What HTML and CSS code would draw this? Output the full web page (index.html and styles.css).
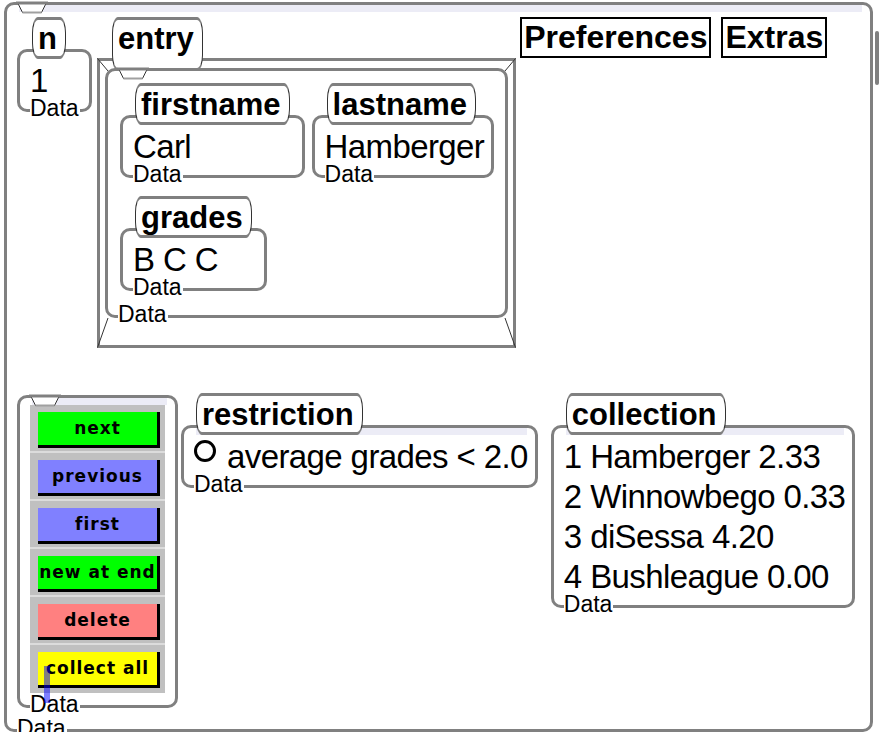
FILE: index.html
```html
<!DOCTYPE html>
<html lang="en">
<head>
    <meta charset="UTF-8">
    <title>Boxer - grade book</title>
    <link rel="stylesheet" href="styles.css">
</head>
<body>
    <div class="world">
        <div class="frame outer lav">
            <svg class="port" width="32" height="13" viewBox="0 0 32 13"><path d="M1.5 1.5L6.5 11.5H25.5L30.5 1.5" fill="#fff" stroke="#333"/><path d="M6.5 11.5H25.5" stroke="#a0a0a0" stroke-width="2"/><path d="M0 2H32" stroke="#808080" stroke-width="3"/></svg>

            <div class="row top-row">
                <!-- n -->
                <div class="box n-box">
                    <div class="tab">n</div>
                    <div class="frame">
                        <div class="line">1</div>
                        <span class="data">Data</span>
                    </div>
                </div>

                <!-- entry -->
                <div class="box entry-box">
                    <div class="tab tall">entry</div>
                    <div class="bevel">
                        <svg class="corner tl" width="12" height="14"><line x1="0.5" y1="0.5" x2="11" y2="13" stroke="#333"/></svg>
                        <svg class="corner tr" width="12" height="14"><line x1="11.5" y1="0.5" x2="1" y2="13" stroke="#333"/></svg>
                        <svg class="corner bl" width="12" height="32"><line x1="0.5" y1="31.5" x2="11" y2="2" stroke="#333"/></svg>
                        <svg class="corner br" width="12" height="32"><line x1="11.5" y1="31.5" x2="1" y2="2" stroke="#333"/></svg>
                        <div class="frame inner">
                            <svg class="port" width="32" height="13" viewBox="0 0 32 13"><path d="M1.5 1.5L6.5 11.5H25.5L30.5 1.5" fill="#fff" stroke="#333"/><path d="M6.5 11.5H25.5" stroke="#a0a0a0" stroke-width="2"/><path d="M0 2H32" stroke="#808080" stroke-width="3"/></svg>
                            <div class="fields">
                                <div class="box">
                                    <div class="tab">firstname</div>
                                    <div class="frame">
                                        <div class="line">Carl</div>
                                        <span class="data">Data</span>
                                    </div>
                                </div>
                                <div class="box">
                                    <div class="tab">lastname</div>
                                    <div class="frame">
                                        <div class="line">Hamberger</div>
                                        <span class="data">Data</span>
                                    </div>
                                </div>
                                <div class="box">
                                    <div class="tab">grades</div>
                                    <div class="frame">
                                        <div class="line">B C C</div>
                                        <span class="data">Data</span>
                                    </div>
                                </div>
                            </div>
                            <span class="data">Data</span>
                        </div>
                    </div>
                </div>

                <div class="menu prefs">Preferences</div>
                <div class="menu">Extras</div>
            </div>

            <div class="row bottom-row">
                <!-- buttons -->
                <div class="box control-box">
                    <div class="frame lav">
                        <svg class="port" width="32" height="13" viewBox="0 0 32 13"><path d="M1.5 1.5L6.5 11.5H25.5L30.5 1.5" fill="#fff" stroke="#333"/><path d="M6.5 11.5H25.5" stroke="#a0a0a0" stroke-width="2"/><path d="M0 2H32" stroke="#808080" stroke-width="3"/></svg>
                        <div class="panel">
                            <div class="cell"><div class="btn green">next</div></div>
                            <div class="cell"><div class="btn blue">previous</div></div>
                            <div class="cell"><div class="btn blue">first</div></div>
                            <div class="cell"><div class="btn green">new at end</div></div>
                            <div class="cell"><div class="btn pink">delete</div></div>
                            <div class="cell"><div class="btn yellow">collect all</div><span class="cursor"></span></div>
                        </div>
                        <span class="data">Data</span>
                    </div>
                </div>

                <!-- restriction -->
                <div class="box restriction-box">
                    <div class="tab">restriction</div>
                    <div class="frame lav">
                        <div class="line check-line"><span class="ring"></span>average grades &lt; 2.0</div>
                        <span class="data">Data</span>
                    </div>
                </div>

                <!-- collection -->
                <div class="box collection-box">
                    <div class="tab">collection</div>
                    <div class="frame lav">
                        <div class="line">1 Hamberger 2.33</div>
                        <div class="line">2 Winnowbego 0.33</div>
                        <div class="line">3 diSessa 4.20</div>
                        <div class="line">4 Bushleague 0.00</div>
                        <span class="data">Data</span>
                    </div>
                </div>
            </div>

            <span class="data">Data</span>
        </div>
        <div class="scroll"></div>
    </div>
</body>
</html>
```

FILE: styles.css
```css
* {
    box-sizing: border-box;
}

body {
    margin: 0;
    background: #fff;
    color: #000;
    font-family: "Liberation Sans", Arial, sans-serif;
}

.world {
    display: flex;
    align-items: flex-start;
}

/* generic box */

.box {
    display: flex;
    flex-direction: column;
}

.frame {
    position: relative;
    min-width: 75px;
    background: #fff;
    border: 3px solid #808080;
    border-radius: 10px;
    padding: 9px 7px 8px 10px;
}

.lav::before {
    content: "";
    position: absolute;
    top: 0;
    left: 12px;
    right: 8px;
    height: 7px;
    background: #ececf6;
}

.tab {
    position: relative;
    z-index: 1;
    align-self: flex-start;
    margin: 0 15px -10px 15px;
    padding: 2px 8px 0 5px;
    background: #fff;
    border-top: 3px solid #808080;
    border-bottom: 3px solid #808080;
    border-left: 1px solid #333;
    border-right: 1px solid #333;
    border-radius: 6px / 16px;
    font-weight: bold;
    font-size: 31px;
    line-height: 34px;
}

.tab.tall {
    padding-bottom: 12px;
    margin-bottom: -13px;
}

.line {
    font-size: 33px;
    line-height: 40px;
    letter-spacing: -0.6px;
    white-space: nowrap;
}

.data {
    position: absolute;
    left: 10px;
    bottom: -6px;
    z-index: 1;
    padding-right: 1px;
    background: #fff;
    font-size: 23px;
    line-height: 14px;
}

.port {
    position: absolute;
    top: -4px;
    left: 9px;
    z-index: 2;
}

/* outer world box */

.outer {
    width: 869px;
    height: 730px;
    margin: 2px 0 0 4px;
    padding: 12px 0 0 10px;
}

.scroll {
    width: 4px;
    height: 54px;
    margin: 31px 0 0 2px;
    background: #808080;
    border-radius: 2px;
}

.row {
    display: flex;
    align-items: flex-start;
}

.n-box {
    margin-right: 5px;
}

.entry-box {
    margin-right: 4px;
}

/* entry: shrunk bevel frame */

.bevel {
    position: relative;
    border: 3px solid #808080;
    padding: 7px 5px 27px 5px;
}

.corner {
    position: absolute;
}

.corner.tl { top: -3px; left: -3px; }
.corner.tr { top: -3px; right: -3px; }
.corner.bl { bottom: -3px; left: -3px; }
.corner.br { bottom: -3px; right: -3px; }

.frame.inner {
    padding: 12px 11px 24px 12px;
}

.fields {
    display: grid;
    grid-template-columns: auto auto;
    justify-content: start;
    align-items: start;
    column-gap: 7px;
    row-gap: 18px;
}

.fields .box {
    justify-self: start;
}

/* menu buttons */

.menu {
    border: 2px solid #000;
    padding: 0 2px;
    font-weight: bold;
    font-size: 32px;
    line-height: 37px;
}

.prefs {
    margin-right: 10px;
}

/* bottom row */

.bottom-row {
    margin-top: 45px;
}

.control-box {
    margin-top: 2px;
}

.control-box .frame {
    padding: 7px 10px 12px 10px;
}

.panel {
    width: 135px;
    background: #c0c0c0;
}

.cell {
    position: relative;
    height: 48px;
    padding: 7px 5px 0 8px;
    border-bottom: 2px solid #dcdcdc;
}

.cell:last-child {
    border-bottom: none;
}

.btn {
    height: 36px;
    border-right: 3px solid #000;
    border-bottom: 3px solid #000;
    text-align: center;
    font-family: "DejaVu Sans", sans-serif;
    font-weight: bold;
    font-size: 17px;
    line-height: 33px;
    letter-spacing: 1px;
    white-space: nowrap;
}

.green { background: #00ff00; }
.blue { background: #8080ff; }
.pink { background: #ff8080; }
.yellow { background: #ffff00; }

.cursor {
    position: absolute;
    left: 14px;
    top: 21px;
    z-index: 3;
    width: 6px;
    height: 37px;
    background: rgba(0, 0, 255, 0.5);
}

.restriction-box {
    margin-left: 3px;
}

.check-line {
    display: flex;
    align-items: flex-start;
}

.ring {
    flex: none;
    width: 22px;
    height: 22px;
    margin: 3px 11px 0 0;
    border: 3px solid #000;
    border-radius: 50%;
}

.collection-box {
    margin-left: 13px;
}
```
